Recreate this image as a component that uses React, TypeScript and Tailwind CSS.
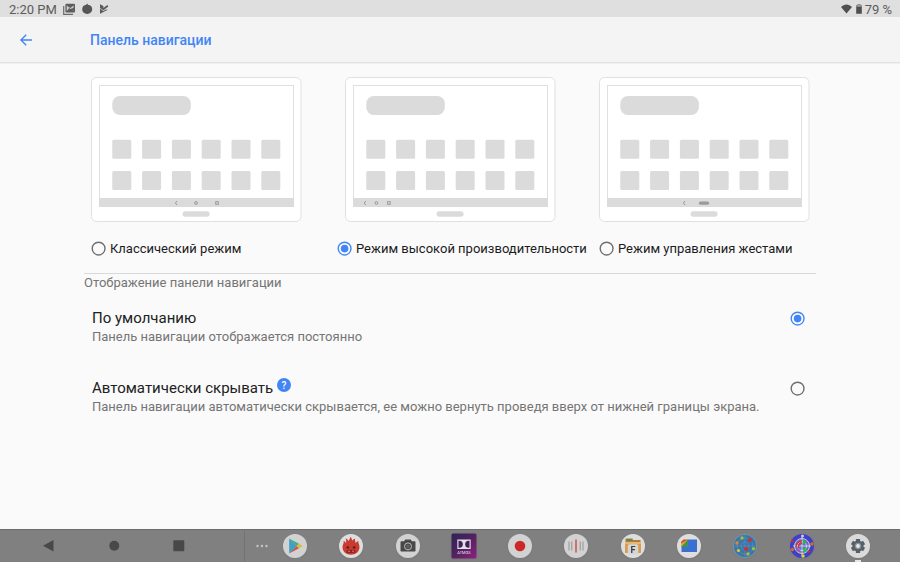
import { useState, type ReactNode } from "react";

const modes = [
    { id: "classic", name: "Классический режим" },
    { id: "performance", name: "Режим высокой производительности" },
    { id: "gestures", name: "Режим управления жестами" },
];

const displayOptions = [
    {
        id: "default",
        name: "По умолчанию",
        description: "Панель навигации отображается постоянно",
        help: false,
    },
    {
        id: "autohide",
        name: "Автоматически скрывать",
        description:
            "Панель навигации автоматически скрывается, ее можно вернуть проведя вверх от нижней границы экрана.",
        help: true,
    },
];

const Radio = ({
    id,
    name,
    checked,
    onChange,
}: {
    id: string;
    name: string;
    checked: boolean;
    onChange: () => void;
}) => (
    <span className="relative size-4 shrink-0">
        <input
            id={id}
            type="radio"
            name={name}
            checked={checked}
            onChange={onChange}
            className="block size-4 appearance-none rounded-full"
        />
        <svg
            viewBox="0 0 16 16"
            className={`pointer-events-none absolute inset-0 size-4 ${checked ? "text-[#4285f4]" : "text-[#6e6e6e]"}`}
            aria-hidden="true"
        >
            <circle cx="7.6" cy="7.6" r="6.4" fill="none" stroke="currentColor" strokeWidth="1.4" />
            {checked && <circle cx="7.6" cy="7.6" r="3.8" fill="currentColor" />}
        </svg>
    </span>
);

// Tablet illustration, the navigation keys differ per mode
const DevicePreview = ({ mode }: { mode: string }) => (
    <svg viewBox="0 0 211 145" className="block h-auto w-full" aria-hidden="true">
        <rect x="0.5" y="0.5" width="209.5" height="144" rx="5" fill="#fff" stroke="#e0e0e0" />
        <rect x="8.5" y="8.5" width="194" height="121" fill="#fff" stroke="#e0e0e0" />
        <rect x="21.3" y="19" width="78.5" height="19" rx="7.5" fill="#dbdbdb" />
        {[62.7, 94].map((y) =>
            [21.3, 51.1, 80.9, 110.7, 140.5, 170.3].map((x) => (
                <rect key={`${x}-${y}`} x={x} y={y} width="19" height="19" rx="1.5" fill="#dbdbdb" />
            ))
        )}
        <rect x="8" y="121" width="195" height="9" fill="#dbdbdb" />
        <rect x="91.6" y="134.3" width="27" height="5.4" rx="2.7" fill="#dbdbdb" />
        <g fill="none" stroke="#9a9a9a" strokeWidth="1">
            {mode === "classic" && (
                <>
                    <path d="M86 124l-1.6 2 1.6 2" />
                    <circle cx="105" cy="126" r="1.4" />
                    <rect x="124.7" y="124.7" width="2.6" height="2.6" />
                </>
            )}
            {mode === "performance" && (
                <>
                    <path d="M20.8 124l-1.6 2 1.6 2" />
                    <circle cx="31.4" cy="126" r="1.4" />
                    <rect x="42.6" y="124.7" width="2.6" height="2.6" />
                </>
            )}
            {mode === "gestures" && (
                <>
                    <path d="M86 124l-1.6 2 1.6 2" />
                    <rect x="99.8" y="124.4" width="10.4" height="3.4" rx="1.7" fill="#9a9a9a" stroke="none" />
                </>
            )}
        </g>
    </svg>
);

const Disc = () => <circle cx="12" cy="12" r="12" fill="#d2d2d2" />;

const dockApps: { name: string; active?: boolean; icon: ReactNode }[] = [
    {
        name: "Play Store",
        icon: (
            <>
                <Disc />
                <path d="M6.2 4.6v14.8l7.4-7.4z" fill="#3f9fc4" />
                <path d="M6.2 4.6L16 9.7 13.6 12z" fill="#42a98c" />
                <path d="M6.2 19.4L16 14.3 13.6 12z" fill="#c8574f" />
                <path d="M16 9.7l3.8 2.3-3.8 2.3L13.6 12z" fill="#d6bd3c" />
            </>
        ),
    },
    {
        name: "AnTuTu",
        icon: (
            <>
                <circle cx="12" cy="12" r="12" fill="#dedede" />
                <path
                    d="M4.6 7c1.2.4 2 1.2 2.4 2.2.3-1.7.3-3-.4-4.7 1.6.5 2.500 1.300 3 2.500.9-1 1.500-2.600 1.700-4.200 1.300 1.200 1.800 2.500 1.800 4 .8-1.100 1.700-1.800 3-2.100-.3 1.700.1 2.800.8 4.300.6-1 1.400-1.700 2.500-1.900-.5 1.600 1.100 3.600 1.100 6.200 0 4.500-3.700 7.400-8.500 7.400S3.500 17.800 3.500 13.300c0-2.600 1.700-4.300 1.100-6.300z"
                    fill="#c93a30"
                />
                <ellipse cx="8.8" cy="13.4" rx="1.300" ry="1.200" fill="#5a1b16" />
                <ellipse cx="15.2" cy="13.4" rx="1.300" ry="1.200" fill="#5a1b16" />
                <rect x="7.5" y="15.7" width="9" height="3.4" rx="1.6" fill="#8d261f" />
                <circle cx="10" cy="17.4" r=".8" fill="#e07a70" />
                <circle cx="14" cy="17.4" r=".8" fill="#e07a70" />
            </>
        ),
    },
    {
        name: "Камера",
        icon: (
            <>
                <Disc />
                <path
                    d="M9.3 5.5h5.4l1.2 1.8h2.6c.6 0 1 .4 1 1v8.2c0 .6-.4 1-1 1h-13c-.6 0-1-.4-1-1V8.300c0-.6.4-1 1-1h2.600z"
                    fill="#484848"
                />
                <circle cx="12" cy="12.4" r="3.5" fill="none" stroke="#b8b8b8" strokeWidth="1" />
                <circle cx="12" cy="12.4" r="1.8" fill="#5f5f5f" />
            </>
        ),
    },
    {
        name: "Dolby Atmos",
        icon: (
            <>
                <defs>
                    <linearGradient id="dolby" x1="0" y1="0" x2="1" y2="1">
                        <stop offset="0" stopColor="#2b2458" />
                        <stop offset="0.5" stopColor="#532260" />
                        <stop offset="1" stopColor="#8e2180" />
                    </linearGradient>
                </defs>
                <rect x="-0.5" y="-0.5" width="25" height="25" rx="1.5" fill="url(#dolby)" />
                <rect x="5.3" y="5.5" width="13.4" height="9.5" fill="#e3dfe6" />
                <path d="M6.5 6.7h.8a3.500 3.500 0 010 7.100h-.8zM17.500 6.700h-.8a3.500 3.500 0 000 7.100h.8z" fill="#432158" />
                <text
                    x="12"
                    y="19.6"
                    textAnchor="middle"
                    fontSize="4"
                    fontWeight="500"
                    fontFamily="Roboto, sans-serif"
                    fill="#d8c9dc"
                >
                    ATMOS
                </text>
            </>
        ),
    },
    {
        name: "Запись экрана",
        icon: (
            <>
                <Disc />
                <circle cx="12" cy="12" r="5.3" fill="#cc2828" />
            </>
        ),
    },
    {
        name: "Диктофон",
        icon: (
            <>
                <Disc />
                <path d="M5 7.5v9M7.8 7.5v9M16.2 7.5v9M19 7.5v9" stroke="#9a9a9a" strokeWidth="1.1" />
                <path d="M12 5.5v13" stroke="#cf3030" strokeWidth="1.2" />
            </>
        ),
    },
    {
        name: "Файловый менеджер",
        icon: (
            <>
                <circle cx="12" cy="12" r="12" fill="#dedede" />
                <path d="M4.5 4.5h6l1.5 1.5h7.5v12.500h-15z" fill="#b77a3a" />
                <path d="M5.5 5.2l7-.4-2 1.8-5 .6z" fill="#4f8f55" />
                <rect x="4" y="8" width="16" height="11" rx="1" fill="#d99b52" />
                <rect x="4" y="8" width="16" height="2" fill="#e6b878" />
                <rect x="6.8" y="10.2" width="10.4" height="10.3" rx="1.5" fill="#d4d6d8" />
                <text
                    x="12"
                    y="18.5"
                    textAnchor="middle"
                    fontSize="9"
                    fontWeight="700"
                    fontFamily="Roboto, sans-serif"
                    fill="#414141"
                >
                    F
                </text>
            </>
        ),
    },
    {
        name: "Файлы",
        icon: (
            <>
                <circle cx="12" cy="12" r="12" fill="#dedede" />
                <path d="M11 5.5h9v12.500H4.500V12z" fill="#3b6fd0" />
                <path d="M4 12.500V8l2.500-2.500H11z" fill="#cf4a3a" />
                <path d="M4 13V9.500l7-4V9z" fill="#dfaf2c" />
                <path d="M4 13l7-7.500V13z" fill="#3f9252" />
            </>
        ),
    },
    {
        name: "Радар",
        icon: (
            <>
                <circle cx="12" cy="12" r="11.7" fill="#3c76a8" stroke="#8aa7bb" strokeWidth=".6" />
                <g fill="none" stroke="#6395b9" strokeWidth=".5">
                    <circle cx="12" cy="12" r="8" />
                    <circle cx="12" cy="12" r="4" />
                    <path d="M12 .5v23M.5 12h23" />
                </g>
                <circle cx="9" cy="4" r="1.7" fill="#a3bf35" />
                <circle cx="17" cy="6" r="2" fill="#cc3038" />
                <circle cx="4" cy="9" r="1.7" fill="#d88b2c" />
                <circle cx="5.5" cy="16.5" r="1.6" fill="#d9cb35" />
                <circle cx="13" cy="15" r="2" fill="#cc3038" />
                <circle cx="20.5" cy="14.8" r="1.7" fill="#a3bf35" />
                <circle cx="15" cy="20" r="1.7" fill="#a3bf35" />
            </>
        ),
    },
    {
        name: "GPS",
        icon: (
            <>
                <circle cx="12" cy="12" r="12" fill="#3f3fc9" />
                <circle cx="12" cy="12" r="7.5" fill="#6270c8" stroke="#c9c9dd" strokeWidth="1" />
                <circle cx="12" cy="12" r="4.5" fill="none" stroke="#c9c9dd" strokeWidth="1" />
                <path d="M12 3v18M3 12h18" stroke="#dedede" strokeWidth=".8" />
                <path d="M6 13a6 6 0 016-6M8.5 14a4 4 0 013.500-5" stroke="#cf3445" strokeWidth="1.5" fill="none" />
                <path d="M6 17l3-3 1 3z" fill="#d43f91" />
                <circle cx="12.5" cy="2" r="1.5" fill="#d0d0d0" />
                <circle cx="14.5" cy="8" r="1.7" fill="#26b83a" />
                <circle cx="15" cy="16" r="1.9" fill="#26c934" />
                <circle cx="22" cy="10" r="1.8" fill="#d16c26" />
                <circle cx="2.5" cy="7" r="1.3" fill="#c53030" />
                <circle cx="2.5" cy="15.5" r="1.7" fill="#d16c26" />
                <circle cx="19" cy="17.5" r="1.3" fill="#cc3030" />
                <circle cx="13" cy="22" r="1.8" fill="#ddd52d" />
            </>
        ),
    },
    {
        name: "Настройки",
        active: true,
        icon: (
            <>
                <circle cx="12" cy="12" r="12" fill="#dadada" />
                <path d="M12 5v14M5.9 8.5l12.2 7M18.1 8.5l-12.2 7" stroke="#566069" strokeWidth="4.2" />
                <circle cx="12" cy="12" r="5.6" fill="#566069" />
                <circle cx="12" cy="12" r="3.2" fill="#8a929a" />
                <circle cx="12" cy="12" r="1.9" fill="#e8e8e8" />
            </>
        ),
    },
];

const StatusBar = () => (
    <div className="flex h-[17px] items-center justify-between bg-[#dfdfdf] pr-2 pl-[9px] text-[13px] leading-4 text-[#5c5c5c]">
        <div className="flex items-center">
            <span className="w-[54px] pt-0.5">2:20 PM</span>
            <svg viewBox="0 0 46 12" className="h-3 w-[46px]" aria-hidden="true">
                <path d="M.7 3v8.3h9.300" fill="none" stroke="#6a6a6a" strokeWidth="1.2" />
                <rect x="2.4" y=".8" width="9.6" height="8.6" rx="1" fill="#5c5c5c" />
                <path d="M3.7 7.800V2.400l3.500 2.500 3.500-2.500v2L8.500 6l2.200 1.900z" fill="#c9c9c9" />
                <path d="M4 8l2.3-3L7.500 6l1-.5L10.500 8z" fill="#5c5c5c" />
                <path
                    d="M24.2.5l.8 1.200c2.500.2 4.200 2 4.200 4.400 0 2.800-2 4.800-5 4.800s-5-2-5-4.800c0-2.400 1.600-4.200 4-4.400z"
                    fill="#555"
                />
                <path d="M37 1.2l3.4 1.900v1.900L44.300 2l1.100 1.500-5 3.700L37 5z" fill="#5c5c5c" />
                <path d="M37 5.6l3.3 2.500 2.600-1.700 2 .3-7.900 4z" fill="#5c5c5c" />
            </svg>
        </div>
        <div className="flex items-center">
            <svg viewBox="0 0 22 12" className="h-3 w-[22px]" aria-hidden="true">
                <path d="M0 4C3.3.6 7.7.6 11 4L5.500 10.500z" fill="#4f4f4f" />
                <path d="M16.5 1.2h3v1h1.300v8.500h-5.600V2.200h1.300z" fill="#4f4f4f" />
                <path d="M16.5 1.2h3v1h1.300v1.500h-5.600V2.200h1.300z" fill="#9c9c9c" />
            </svg>
            <span className="pt-0.5 pl-0.5">79 %</span>
        </div>
    </div>
);

const SystemNav = () => (
    <nav className="flex h-[33px] shrink-0 bg-[#808080] shadow-[inset_0_1px_0_#6c6c6c]">
        <div className="flex w-[245px] shrink-0 items-center border-r border-[#737373] pl-4">
            <button type="button" aria-label="Назад" className="flex w-16 justify-center">
                <svg viewBox="0 0 12 12" className="size-3" fill="#484848">
                    <path d="M11.5 0v11.500L1 5.700z" />
                </svg>
            </button>
            <button type="button" aria-label="Домой" className="flex w-[67px] justify-center">
                <svg viewBox="0 0 12 12" className="size-3" fill="#484848">
                    <circle cx="6.3" cy="5.7" r="5" />
                </svg>
            </button>
            <button type="button" aria-label="Недавние" className="flex w-16 justify-center">
                <svg viewBox="0 0 12 12" className="size-3" fill="#484848">
                    <rect x=".3" y=".2" width="11" height="11" rx=".8" />
                </svg>
            </button>
        </div>
        <button type="button" aria-label="Ещё" className="flex w-[33px] shrink-0 items-center justify-center">
            <svg viewBox="0 0 12 4" className="h-1 w-3" fill="#c4c4c4">
                <circle cx="1.5" cy="2" r="1.2" />
                <circle cx="6" cy="2" r="1.2" />
                <circle cx="10.5" cy="2" r="1.2" />
            </svg>
        </button>
        <ul className="flex flex-1 items-stretch justify-between pr-[30px] pl-[5px]">
            {dockApps.map((app) => (
                <li key={app.name} className="relative pt-[5px]">
                    <button type="button" aria-label={app.name} className="block">
                        <svg viewBox="0 0 24 24" className="block size-6 overflow-visible drop-shadow-xs">
                            {app.icon}
                        </svg>
                    </button>
                    {app.active && (
                        <span className="absolute bottom-0 left-1/2 h-0.5 w-1.5 -translate-x-1/2 bg-[#e6e6e6]" />
                    )}
                </li>
            ))}
        </ul>
    </nav>
);

const App = () => {
    const [mode, setMode] = useState("performance");
    const [display, setDisplay] = useState("default");

    return (
        <div className="flex min-h-screen flex-col bg-[#fafafa] font-[Roboto,sans-serif]">
            <StatusBar />
            <header className="flex h-[46px] items-center border-b border-[#e2e2e2] bg-[#f4f4f4] pl-5 text-[#4285f4] shadow-[0_1px_1px_#f0f0f0]">
                <button type="button" aria-label="Назад" className="w-[70px]">
                    <svg viewBox="0 0 12 12" className="size-3" fill="none" stroke="currentColor" strokeWidth="1.4">
                        <path d="M12 6H1M6.2.8L1 6l5.200 5.200" />
                    </svg>
                </button>
                <h1 className="text-sm font-medium">Панель навигации</h1>
            </header>

            <main className="flex-1 px-[84px] pt-3.5">
                <div className="grid grid-cols-3 gap-[43px] pr-1.5 pl-[7px]">
                    {modes.map((item) => (
                        <DevicePreview key={item.id} mode={item.id} />
                    ))}
                </div>
                <div className="mt-[17px] grid grid-cols-[246fr_262fr_217fr] pl-[7px]">
                    {modes.map((item) => (
                        <label
                            key={item.id}
                            htmlFor={item.id}
                            className="flex items-center gap-[3px] text-[13px] leading-5 whitespace-nowrap text-[#1c1c1c]"
                        >
                            <Radio
                                id={item.id}
                                name="mode"
                                checked={mode === item.id}
                                onChange={() => setMode(item.id)}
                            />
                            {item.name}
                        </label>
                    ))}
                </div>

                <section className="mt-3.5 border-t border-[#d9d9d9]">
                    <h2 className="pt-px text-[13px] leading-4 text-[#757575]">Отображение панели навигации</h2>
                    <div className="flex flex-col gap-[33px] pt-[17px] pr-2.5 pl-2">
                        {displayOptions.map((option) => (
                            <div key={option.id} className="flex items-start justify-between">
                                <label htmlFor={option.id}>
                                    <span className="flex gap-1 text-[15px] leading-5 text-[#212121]">
                                        {option.name}
                                        {option.help && (
                                            <svg viewBox="0 0 14 14" className="size-3.5" aria-hidden="true">
                                                <circle cx="7" cy="7" r="7" fill="#4285f4" />
                                                <text
                                                    x="7"
                                                    y="10.7"
                                                    textAnchor="middle"
                                                    fontSize="10"
                                                    fontWeight="500"
                                                    fill="#fff"
                                                >
                                                    ?
                                                </text>
                                            </svg>
                                        )}
                                    </span>
                                    <span className="block text-[13px] leading-[17px] text-[#757575]">
                                        {option.description}
                                    </span>
                                </label>
                                <span className="flex h-5 items-center pt-px">
                                    <Radio
                                        id={option.id}
                                        name="display"
                                        checked={display === option.id}
                                        onChange={() => setDisplay(option.id)}
                                    />
                                </span>
                            </div>
                        ))}
                    </div>
                </section>
            </main>

            <SystemNav />
        </div>
    );
};

export default App;
